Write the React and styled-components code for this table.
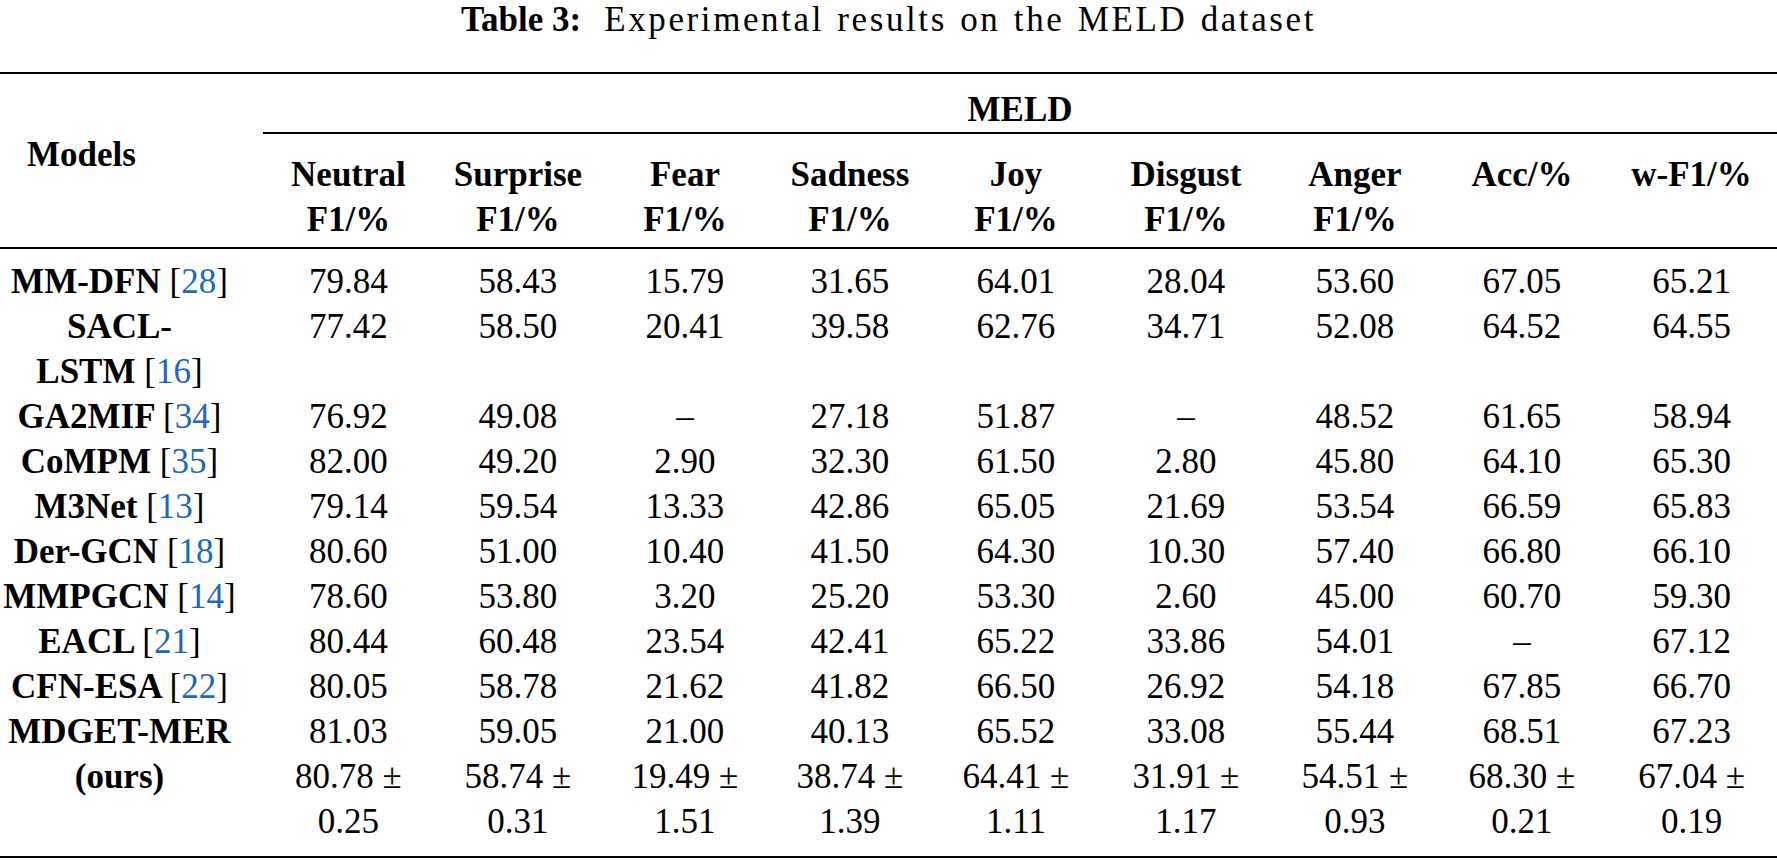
import React from "react";
import styled, { createGlobalStyle } from "styled-components";

const GlobalStyle = createGlobalStyle`
  html, body {
    margin: 0;
    padding: 0;
    background: #ffffff;
  }
  body {
    font-family: "Liberation Serif", "Times New Roman", serif;
    color: #000000;
    overflow: hidden;
  }
`;

const Page = styled.div`
  width: 1777px;
  display: flex;
  flex-direction: column;
  align-items: center;
`;

const Caption = styled.div`
  height: 40px;
  line-height: 40px;
  font-size: 35px;
  margin-bottom: 32px;
  white-space: nowrap;
`;

const CaptionLabel = styled.span`
  font-weight: 700;
  margin-right: 23px;
`;

const CaptionText = styled.span`
  font-weight: 400;
  letter-spacing: 2.6px;
  word-spacing: 2px;
`;

const Table = styled.table`
  width: 1777px;
  table-layout: fixed;
  border-collapse: separate;
  border-spacing: 0;
  font-size: 35px;
  line-height: 45px;
`;

const ModelsHead = styled.th`
  text-align: left;
  vertical-align: top;
  font-weight: 700;
  padding: 58px 0 0 27px;
  border-top: 2px solid #000;
  border-bottom: 2px solid #000;
`;

const GroupHead = styled.th`
  text-align: center;
  vertical-align: top;
  font-weight: 700;
  padding: 13px 0 0 0;
  border-top: 2px solid #000;
  border-bottom: 2px solid #000;
`;

const ColHead = styled.th`
  text-align: center;
  vertical-align: top;
  font-weight: 700;
  padding: 18px 12px 5px;
  border-bottom: 2px solid #000;
`;

const NameCell = styled.td`
  text-align: center;
  vertical-align: top;
  font-weight: 700;
  padding: ${(p) => (p.$first ? "10px" : "0")} 24px ${(p) => (p.$last ? "12px" : "0")} 0;
  border-bottom: ${(p) => (p.$last ? "2px solid #000" : "none")};
`;

const ValueCell = styled.td`
  text-align: center;
  vertical-align: top;
  font-weight: 400;
  padding: ${(p) => (p.$first ? "10px" : "0")} 12px ${(p) => (p.$last ? "12px" : "0")};
  border-bottom: ${(p) => (p.$last ? "2px solid #000" : "none")};
`;

const Ref = styled.span`
  font-weight: 400;
`;

const RefNum = styled.span`
  color: #1b67c2;
`;

const colWidths = [263, 171, 168, 166, 164, 168, 172, 166, 168, 171];

const heads = [
  ["Neutral", "F1/%"],
  ["Surprise", "F1/%"],
  ["Fear", "F1/%"],
  ["Sadness", "F1/%"],
  ["Joy", "F1/%"],
  ["Disgust", "F1/%"],
  ["Anger", "F1/%"],
  ["Acc/%"],
  ["w-F1/%"],
];

const rows = [
  { name: ["MM-DFN"], ref: "28", vals: ["79.84", "58.43", "15.79", "31.65", "64.01", "28.04", "53.60", "67.05", "65.21"] },
  { name: ["SACL-", "LSTM"], ref: "16", vals: ["77.42", "58.50", "20.41", "39.58", "62.76", "34.71", "52.08", "64.52", "64.55"] },
  { name: ["GA2MIF"], ref: "34", vals: ["76.92", "49.08", "–", "27.18", "51.87", "–", "48.52", "61.65", "58.94"] },
  { name: ["CoMPM"], ref: "35", vals: ["82.00", "49.20", "2.90", "32.30", "61.50", "2.80", "45.80", "64.10", "65.30"] },
  { name: ["M3Net"], ref: "13", vals: ["79.14", "59.54", "13.33", "42.86", "65.05", "21.69", "53.54", "66.59", "65.83"] },
  { name: ["Der-GCN"], ref: "18", vals: ["80.60", "51.00", "10.40", "41.50", "64.30", "10.30", "57.40", "66.80", "66.10"] },
  { name: ["MMPGCN"], ref: "14", vals: ["78.60", "53.80", "3.20", "25.20", "53.30", "2.60", "45.00", "60.70", "59.30"] },
  { name: ["EACL"], ref: "21", vals: ["80.44", "60.48", "23.54", "42.41", "65.22", "33.86", "54.01", "–", "67.12"] },
  { name: ["CFN-ESA"], ref: "22", vals: ["80.05", "58.78", "21.62", "41.82", "66.50", "26.92", "54.18", "67.85", "66.70"] },
];

const oursBest = ["81.03", "59.05", "21.00", "40.13", "65.52", "33.08", "55.44", "68.51", "67.23"];
const oursMean = [
  ["80.78", "0.25"],
  ["58.74", "0.31"],
  ["19.49", "1.51"],
  ["38.74", "1.39"],
  ["64.41", "1.11"],
  ["31.91", "1.17"],
  ["54.51", "0.93"],
  ["68.30", "0.21"],
  ["67.04", "0.19"],
];

export default function App() {
  return (
    <>
      <GlobalStyle />
      <Page>
        <Caption>
          <CaptionLabel>Table 3:</CaptionLabel>
          <CaptionText>Experimental results on the MELD dataset</CaptionText>
        </Caption>
        <Table>
          <colgroup>
            {colWidths.map((w, i) => (
              <col key={i} style={{ width: `${w}px` }} />
            ))}
          </colgroup>
          <thead>
            <tr>
              <ModelsHead rowSpan={2}>Models</ModelsHead>
              <GroupHead colSpan={9}>MELD</GroupHead>
            </tr>
            <tr>
              {heads.map((h, i) => (
                <ColHead key={i}>
                  {h[0]}
                  {h[1] && (
                    <>
                      <br />
                      {h[1]}
                    </>
                  )}
                </ColHead>
              ))}
            </tr>
          </thead>
          <tbody>
            {rows.map((r, ri) => (
              <tr key={r.name.join("")}>
                <NameCell $first={ri === 0}>
                  {r.name.length > 1 ? (
                    <>
                      {r.name[0]}
                      <br />
                      {r.name[1]}
                    </>
                  ) : (
                    r.name[0]
                  )}{" "}
                  <Ref>
                    [<RefNum>{r.ref}</RefNum>]
                  </Ref>
                </NameCell>
                {r.vals.map((v, vi) => (
                  <ValueCell key={vi} $first={ri === 0}>
                    {v}
                  </ValueCell>
                ))}
              </tr>
            ))}
            <tr>
              <NameCell rowSpan={2} $last>
                MDGET-MER
                <br />
                (ours)
              </NameCell>
              {oursBest.map((v, vi) => (
                <ValueCell key={vi}>{v}</ValueCell>
              ))}
            </tr>
            <tr>
              {oursMean.map((m, mi) => (
                <ValueCell key={mi} $last>
                  {m[0]} ±
                  <br />
                  {m[1]}
                </ValueCell>
              ))}
            </tr>
          </tbody>
        </Table>
      </Page>
    </>
  );
}
